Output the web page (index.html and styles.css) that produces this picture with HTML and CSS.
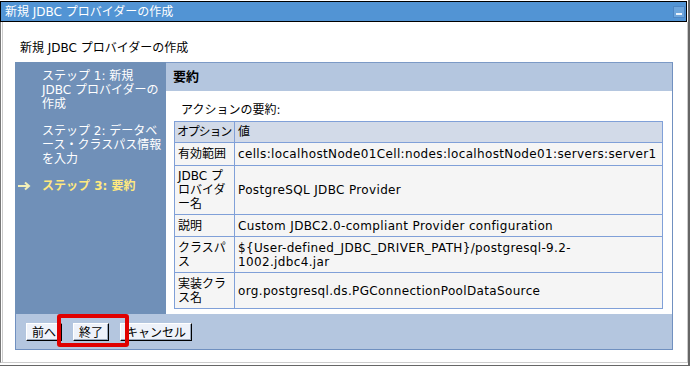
FILE: index.html
```html
<!DOCTYPE html>
<html lang="ja">
<head>
    <meta charset="UTF-8">
    <title>新規 JDBC プロバイダーの作成</title>
    <link rel="stylesheet" href="styles.css">
</head>
<body>
    <div class="window">
        <div class="titlebar">
            <span class="title">新規 JDBC プロバイダーの作成</span>
            <span class="min-btn"></span>
        </div>
        <div class="frame">
            <div class="page-title">新規 JDBC プロバイダーの作成</div>
            <div class="wizard">
                <div class="wizard-body">
                    <ul class="steps">
                        <li class="step"><span class="marker"></span><span>ステップ 1: 新規<br>JDBC プロバイダーの<br>作成</span></li>
                        <li class="step"><span class="marker"></span><span>ステップ 2: データベ<br>ース・クラスパス情報<br>を入力</span></li>
                        <li class="step current">
                            <span class="marker">
                                <svg width="14" height="10" viewBox="0 0 14 10"><path d="M1 5H12M8 1.5L12 5L8 8.5" fill="none" stroke="#f2efb8" stroke-width="2"/></svg>
                            </span>
                            <span>ステップ 3: 要約</span>
                        </li>
                    </ul>
                    <div class="main">
                        <div class="main-head">要約</div>
                        <div class="main-body">
                            <p class="caption">アクションの要約:</p>
                            <table class="summary">
                                <colgroup><col class="col-key"><col></colgroup>
                                <tr class="row-head">
                                    <th class="tight">オプション</th>
                                    <th>値</th>
                                </tr>
                                <tr class="row-one">
                                    <td>有効範囲</td>
                                    <td class="val">cells:localhostNode01Cell:nodes:localhostNode01:servers:server1</td>
                                </tr>
                                <tr class="row-three">
                                    <td>JDBC プロバイダー名</td>
                                    <td class="val">PostgreSQL JDBC Provider</td>
                                </tr>
                                <tr class="row-short">
                                    <td>説明</td>
                                    <td class="val">Custom JDBC2.0-compliant Provider configuration</td>
                                </tr>
                                <tr class="row-two">
                                    <td>クラスパス</td>
                                    <td class="val">${User-defined_JDBC_DRIVER_PATH}/postgresql-9.2-<br>1002.jdbc4.jar</td>
                                </tr>
                                <tr class="row-two">
                                    <td>実装クラス名</td>
                                    <td class="val">org.postgresql.ds.PGConnectionPoolDataSource</td>
                                </tr>
                            </table>
                        </div>
                    </div>
                </div>
                <div class="buttons">
                    <button>前へ</button>
                    <button>終了</button>
                    <button>キャンセル</button>
                    <div class="highlight"></div>
                </div>
            </div>
        </div>
    </div>
</body>
</html>
```

FILE: styles.css
```css
html, body {
    margin: 0;
    padding: 0;
    background-color: #fff;
}
body {
    font-family: "DejaVu Sans", "Noto Sans CJK JP", sans-serif;
    font-size: 12px;
    color: #000;
}
.window {
    width: 690px;
    height: 366px;
    box-sizing: border-box;
    padding-top: 1px;
    border-right: 2px solid #666;
    border-bottom: 1px solid #666;
    display: flex;
    flex-direction: column;
}
.titlebar {
    height: 21px;
    box-sizing: border-box;
    margin-right: 1px;
    border: 1px solid #000;
    background-color: #5294d4;
    color: #fff;
    display: flex;
    align-items: center;
    justify-content: space-between;
    padding: 0 1px 0 4px;
}
.title {
    line-height: 16px;
}
.min-btn {
    width: 12px;
    height: 12px;
    box-sizing: border-box;
    background-color: #6ea6dc;
    border: 1px solid #4d86c4;
    position: relative;
}
.min-btn::after {
    content: "";
    position: absolute;
    left: 2px;
    right: 2px;
    top: 6px;
    height: 2px;
    background-color: #eef4fb;
}
.frame {
    flex: 1;
    margin-bottom: 2px;
    border-left: 1px solid #777;
    border-right: 1px solid #ccc;
    border-bottom: 1px solid #ccc;
    box-shadow: inset 1px 0 0 #fff, inset 2px 0 0 #ccc;
    padding: 18px 0 0 14px;
}
.page-title {
    line-height: 16px;
    padding-left: 5px;
    margin-bottom: 6px;
}
.wizard {
    width: 658px;
}
.wizard-body {
    display: flex;
    height: 252px;
}
.steps {
    list-style: none;
    margin: 0;
    padding: 7px 0 0 2px;
    width: 149px;
    background-color: #7090b8;
    color: #fff;
    line-height: 14px;
}
.step {
    display: flex;
    white-space: nowrap;
    margin-bottom: 13px;
}
.step + .step {
    margin-top: 1px;
}
.step + .step + .step {
    margin-top: 3px;
}
.marker {
    width: 25px;
    flex: none;
    display: flex;
    align-items: center;
}
.current {
    color: #ffe97f;
    font-weight: bold;
}
.main {
    flex: 1;
    border-top: 1px solid #7c9ac6;
    border-right: 1px solid #7090c0;
    display: flex;
    flex-direction: column;
}
.main-head {
    height: 28px;
    background-color: #b4c6df;
    font-size: 13px;
    font-weight: bold;
    line-height: 28px;
    padding-left: 7px;
}
.main-body {
    padding: 12px 9px 0 8px;
}
.caption {
    margin: 0 0 4px 7px;
    line-height: 14px;
}
.summary {
    width: 100%;
    table-layout: fixed;
    border-collapse: collapse;
    border: 1px solid #80a0d8;
}
.col-key {
    width: 60px;
}
.summary th, .summary td {
    border: 1px solid #80a0d8;
    padding: 0 3px;
    line-height: 14px;
    text-align: left;
    font-weight: normal;
    vertical-align: middle;
}
.summary th {
    background-color: #d2dae8;
}
.summary td {
    background-color: #f5f5f5;
}
.summary .tight {
    white-space: nowrap;
    letter-spacing: -1.2px;
    padding-left: 2px;
}
.row-head {
    height: 21px;
}
.row-one {
    height: 23px;
}
.row-short {
    height: 22px;
}
.row-two {
    height: 36px;
}
.row-three {
    height: 49px;
}
.val {
    letter-spacing: 0.35px;
}
.buttons {
    position: relative;
    background-color: #b4c6df;
    border: 1px solid #7090c0;
    border-top: none;
    padding: 9px 0 0 10px;
    height: 26px;
    display: flex;
    align-items: flex-start;
    gap: 11px;
}
button {
    height: 18px;
    padding: 0 5px;
    margin: 0;
    font-family: "Noto Sans CJK JP", sans-serif;
    font-size: 12px;
    line-height: 16px;
    color: #000;
    background-color: #eef2fa;
    border: 1px solid;
    border-color: #fff #000 #000 #fff;
    box-shadow: inset -1px -1px 0 #9aa8bc;
}
.highlight {
    position: absolute;
    left: 41px;
    top: 0;
    width: 72px;
    height: 33px;
    box-sizing: border-box;
    border: 4px solid #e00000;
    border-radius: 3px;
}
```
